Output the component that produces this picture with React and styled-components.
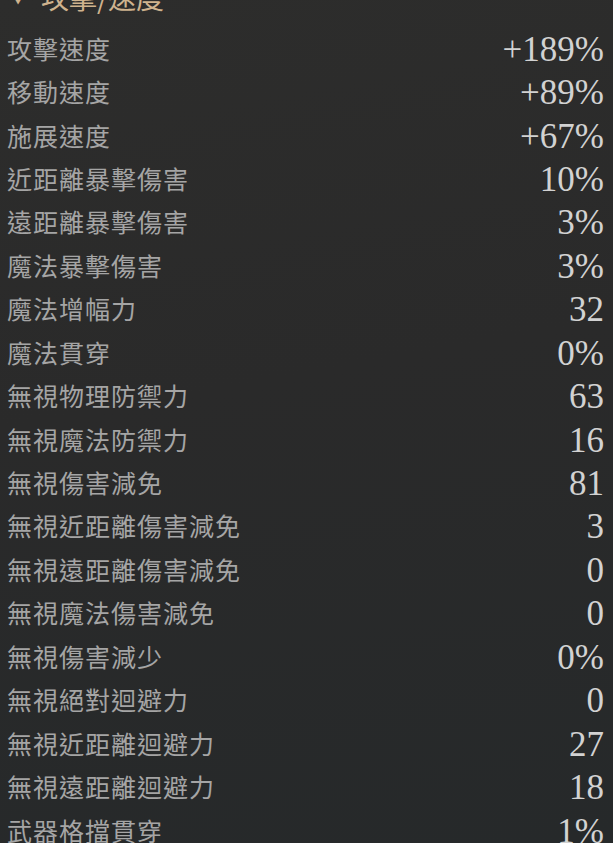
import React from 'react';
import styled, { createGlobalStyle } from 'styled-components';

const GlobalStyle = createGlobalStyle`
  html, body {
    margin: 0;
    padding: 0;
    background: #2a2b2b;
  }
  body {
    font-family: "Noto Sans CJK TC", "Noto Sans", sans-serif;
  }
`;

const Panel = styled.div`
  width: 613px;
  height: 843px;
  overflow: hidden;
  background: linear-gradient(170deg, #2d2d2c 0%, #2a2a2a 45%, #26292a 100%);
`;

const List = styled.div`
  margin-top: -17px;
  padding: 0 9px 0 7px;
`;

const Header = styled.div`
  display: flex;
  align-items: center;
  gap: 16px;
  height: 43.44px;
  box-sizing: border-box;
  padding: 0 0 16px 4px;
  color: #cfb38e;
  font-size: 28px;
  line-height: 1;
`;

const Arrow = styled.span`
  font-size: 14px;
`;

const Row = styled.div`
  display: flex;
  align-items: center;
  justify-content: space-between;
  height: 43.44px;
`;

const Label = styled.span`
  color: #a5a5a5;
  font-size: 25px;
  letter-spacing: 1px;
  line-height: 1;
`;

const Value = styled.span`
  color: #d2d2d2;
  font-family: "Liberation Serif", serif;
  font-size: 35px;
  line-height: 1;
  padding-top: 2px;
`;

const stats = [
  ['攻擊速度', '+189%'],
  ['移動速度', '+89%'],
  ['施展速度', '+67%'],
  ['近距離暴擊傷害', '10%'],
  ['遠距離暴擊傷害', '3%'],
  ['魔法暴擊傷害', '3%'],
  ['魔法增幅力', '32'],
  ['魔法貫穿', '0%'],
  ['無視物理防禦力', '63'],
  ['無視魔法防禦力', '16'],
  ['無視傷害減免', '81'],
  ['無視近距離傷害減免', '3'],
  ['無視遠距離傷害減免', '0'],
  ['無視魔法傷害減免', '0'],
  ['無視傷害減少', '0%'],
  ['無視絕對迴避力', '0'],
  ['無視近距離迴避力', '27'],
  ['無視遠距離迴避力', '18'],
  ['武器格擋貫穿', '1%'],
];

const App = () => (
  <Panel>
    <GlobalStyle />
    <List>
      <Header>
        <Arrow>▼</Arrow>
        攻擊/速度
      </Header>
      {stats.map(([label, value]) => (
        <Row key={label}>
          <Label>{label}</Label>
          <Value>{value}</Value>
        </Row>
      ))}
    </List>
  </Panel>
);

export default App;
